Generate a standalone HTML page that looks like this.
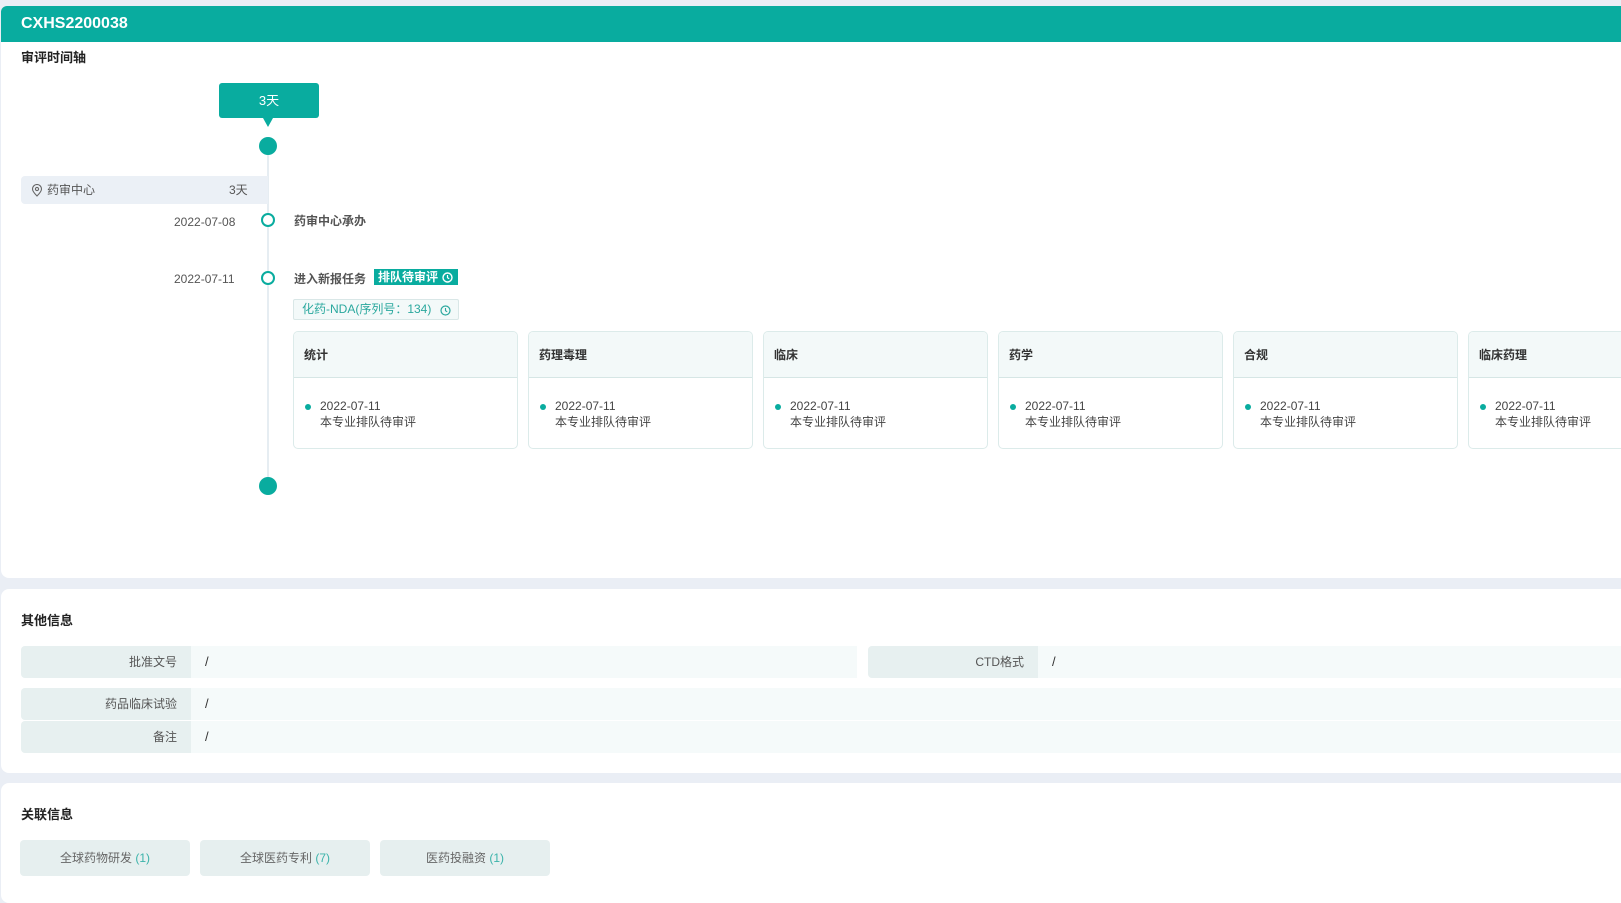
<!DOCTYPE html>
<html><head><meta charset="utf-8"><style>
*{box-sizing:border-box;margin:0;padding:0}
body{width:1621px;height:882px;overflow:hidden;background:#eaeef5;font-family:"Liberation Sans","Noto Sans CJK SC",sans-serif;position:relative;color:#333}
.abs{position:absolute}
.card{position:absolute;left:1px;width:1640px;background:#fff;border-radius:8px}
.hdr{left:1px;top:6px;width:1640px;height:36px;background:#09ac9f;border-radius:6px 6px 0 0;color:#fff;font-weight:bold;font-size:16px;line-height:36px;padding-left:20px}
.h{font-size:13px;font-weight:bold;color:#222}
.pc{position:absolute;top:331px;width:225px;height:118px;border:1px solid #dcebea;border-radius:5px;background:#fff;overflow:hidden}
.pc .t{height:46px;background:#f3f9f9;border-bottom:1px solid #d6e6e5;font-size:12px;font-weight:bold;line-height:46px;padding-left:10px;color:#333}
.pc .d{position:absolute;left:26px;top:66px;font-size:12px;color:#444;line-height:16px}
.pc .b{position:absolute;left:11px;top:72px;width:6px;height:6px;border-radius:50%;background:#09ac9f}
.lab{position:absolute;background:#e7f0f0;font-size:12px;color:#555;text-align:right;padding-right:14px;line-height:32px;border-radius:4px 0 0 4px}
.val{position:absolute;background:#f5fafa;font-size:13px;color:#333;padding-left:14px;line-height:32px}
.btn{position:absolute;top:840px;width:148px;height:36px;background:#e6efef;border-radius:4px;font-size:12px;color:#666;text-align:center;line-height:36px}
.btn span{color:#3bb3aa}
</style></head><body>
<div class="card" style="top:6px;height:572px"></div>
<div class="abs hdr">CXHS2200038</div>
<div class="abs h" style="left:21px;top:47px">审评时间轴</div>
<div class="abs" style="left:219px;top:83px;width:100px;height:35px;background:#09ac9f;border-radius:3px;color:#fff;font-size:13px;text-align:center;line-height:35px">3天</div>
<div class="abs" style="left:263px;top:118px;width:0;height:0;border-left:5px solid transparent;border-right:5px solid transparent;border-top:9px solid #09ac9f"></div>
<div class="abs" style="left:267px;top:146px;width:2px;height:340px;background:#e6edf2"></div>
<div class="abs" style="left:259px;top:137px;width:18px;height:18px;border-radius:50%;background:#09ac9f"></div>
<div class="abs" style="left:21px;top:176px;width:247px;height:28px;background:#ebf0f6;border-radius:4px 0 0 4px;font-size:12px;color:#555;line-height:28px">
<svg class="abs" style="left:10px;top:8px" width="12" height="13" viewBox="0 0 12 13"><path d="M6 12C2.5 8.5 1.5 6.8 1.5 5A4.5 4.5 0 0 1 10.5 5C10.5 6.8 9.5 8.5 6 12Z" fill="none" stroke="#666" stroke-width="1.1"/><circle cx="6" cy="5" r="1.6" fill="none" stroke="#666" stroke-width="1.1"/></svg>
<span class="abs" style="left:26px">药审中心</span><span class="abs" style="left:208px">3天</span></div>
<div class="abs" style="left:174px;top:215px;font-size:12px;color:#555">2022-07-08</div>
<div class="abs" style="left:174px;top:272px;font-size:12px;color:#555">2022-07-11</div>
<div class="abs" style="left:261px;top:213px;width:14px;height:14px;border-radius:50%;border:2px solid #09ac9f;background:#fff"></div>
<div class="abs" style="left:261px;top:271px;width:14px;height:14px;border-radius:50%;border:2px solid #09ac9f;background:#fff"></div>
<div class="abs" style="left:294px;top:212px;font-size:12px;font-weight:bold;color:#555">药审中心承办</div>
<div class="abs" style="left:294px;top:270px;font-size:12px;font-weight:bold;color:#555">进入新报任务</div>
<div class="abs" style="left:374px;top:269px;width:84px;height:16px;background:#09ac9f;color:#fff;font-size:12px;font-weight:bold;line-height:16px;padding-left:4px">排队待审评
<svg class="abs" style="left:68px;top:3px" width="11" height="11" viewBox="0 0 11 11"><circle cx="5.5" cy="5.5" r="4.5" fill="none" stroke="#fff" stroke-width="1.4"/><path d="M5.5 3V5.7L7.2 6.8" fill="none" stroke="#fff" stroke-width="1.2"/></svg></div>
<div class="abs" style="left:293px;top:299px;width:166px;height:21px;border:1px solid #d9e7e7;background:#f3f9f9;border-radius:2px;color:#2aa89e;font-size:12px;line-height:19px;padding-left:8px">化药-NDA(序列号：134)
<svg class="abs" style="left:146px;top:5px" width="11" height="11" viewBox="0 0 11 11"><circle cx="5.5" cy="5.5" r="4.5" fill="none" stroke="#2aa89e" stroke-width="1.2"/><path d="M5.5 3V5.7L7.2 6.8" fill="none" stroke="#2aa89e" stroke-width="1.1"/></svg></div>
<div class="pc" style="left:293px"><div class="t">统计</div><div class="b"></div><div class="d">2022-07-11<br>本专业排队待审评</div></div>
<div class="pc" style="left:528px"><div class="t">药理毒理</div><div class="b"></div><div class="d">2022-07-11<br>本专业排队待审评</div></div>
<div class="pc" style="left:763px"><div class="t">临床</div><div class="b"></div><div class="d">2022-07-11<br>本专业排队待审评</div></div>
<div class="pc" style="left:998px"><div class="t">药学</div><div class="b"></div><div class="d">2022-07-11<br>本专业排队待审评</div></div>
<div class="pc" style="left:1233px"><div class="t">合规</div><div class="b"></div><div class="d">2022-07-11<br>本专业排队待审评</div></div>
<div class="pc" style="left:1468px"><div class="t">临床药理</div><div class="b"></div><div class="d">2022-07-11<br>本专业排队待审评</div></div>
<div class="abs" style="left:259px;top:477px;width:18px;height:18px;border-radius:50%;background:#09ac9f"></div>

<div class="card" style="top:589px;height:184px"></div>
<div class="abs h" style="left:21px;top:610px">其他信息</div>
<div class="lab" style="left:21px;top:646px;width:170px">批准文号</div>
<div class="val" style="left:191px;top:646px;width:666px">/</div>
<div class="lab" style="left:868px;top:646px;width:170px">CTD格式</div>
<div class="val" style="left:1038px;top:646px;width:600px">/</div>
<div class="lab" style="left:21px;top:688px;width:170px">药品临床试验</div>
<div class="val" style="left:191px;top:688px;width:1450px">/</div>
<div class="lab" style="left:21px;top:721px;width:170px">备注</div>
<div class="val" style="left:191px;top:721px;width:1450px">/</div>

<div class="card" style="top:783px;height:120px"></div>
<div class="abs h" style="left:21px;top:804px">关联信息</div>
<div class="btn" style="left:20px;width:170px">全球药物研发 <span>(1)</span></div>
<div class="btn" style="left:200px;width:170px">全球医药专利 <span>(7)</span></div>
<div class="btn" style="left:380px;width:170px">医药投融资 <span>(1)</span></div>
</body></html>
